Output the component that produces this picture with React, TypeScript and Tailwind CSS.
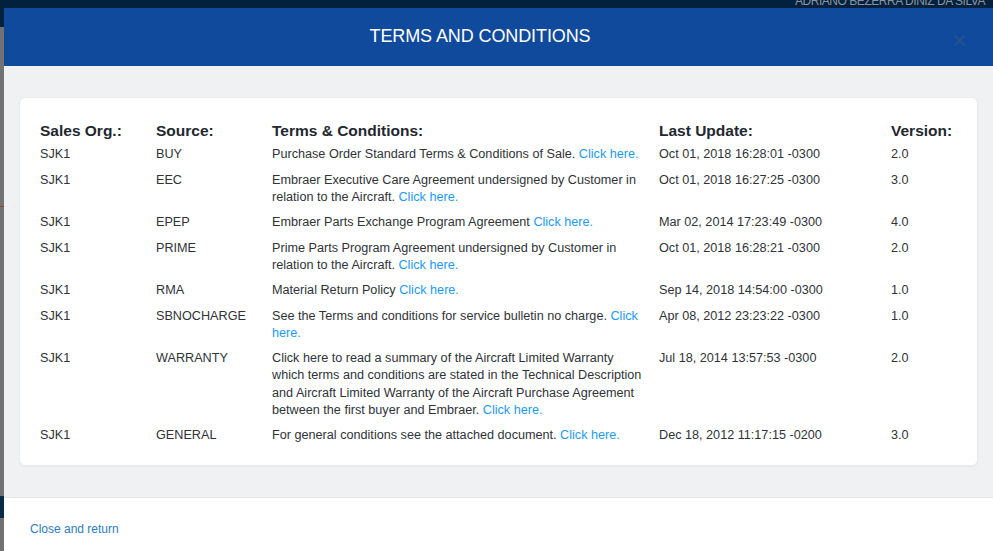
import React from "react";

const rows: { org: string; source: string; text: string; date: string; ver: string }[] = [
  { org: "SJK1", source: "BUY", text: "Purchase Order Standard Terms & Conditions of Sale.", date: "Oct 01, 2018 16:28:01 -0300", ver: "2.0" },
  { org: "SJK1", source: "EEC", text: "Embraer Executive Care Agreement undersigned by Customer in relation to the Aircraft.", date: "Oct 01, 2018 16:27:25 -0300", ver: "3.0" },
  { org: "SJK1", source: "EPEP", text: "Embraer Parts Exchange Program Agreement", date: "Mar 02, 2014 17:23:49 -0300", ver: "4.0" },
  { org: "SJK1", source: "PRIME", text: "Prime Parts Program Agreement undersigned by Customer in relation to the Aircraft.", date: "Oct 01, 2018 16:28:21 -0300", ver: "2.0" },
  { org: "SJK1", source: "RMA", text: "Material Return Policy", date: "Sep 14, 2018 14:54:00 -0300", ver: "1.0" },
  { org: "SJK1", source: "SBNOCHARGE", text: "See the Terms and conditions for service bulletin no charge.", date: "Apr 08, 2012 23:23:22 -0300", ver: "1.0" },
  {
    org: "SJK1",
    source: "WARRANTY",
    text: "Click here to read a summary of the Aircraft Limited Warranty which terms and conditions are stated in the Technical Description and Aircraft Limited Warranty of the Aircraft Purchase Agreement between the first buyer and Embraer.",
    date: "Jul 18, 2014 13:57:53 -0300",
    ver: "2.0",
  },
  { org: "SJK1", source: "GENERAL", text: "For general conditions see the attached document.", date: "Dec 18, 2012 11:17:15 -0200", ver: "3.0" },
];

export default function App() {
  return (
    <div className="w-[993px] h-[551px] overflow-hidden flex flex-col bg-[#01213f] font-['Liberation_Sans',Arial,sans-serif]">
      {/* top nav remnant */}
      <div className="h-[8px] overflow-hidden flex justify-end pr-[8px]">
        <span className="text-[12px] leading-[12px] -mt-[5px] tracking-[-0.45px] text-[#8b939d] uppercase">
          Adriano Bezerra Diniz da Silva
        </span>
      </div>
      <div className="flex flex-1 min-h-0">
        {/* background strip at left */}
        <div className="w-[4px] flex flex-col">
          <div className="h-[19px] bg-[#01213f]" />
          <div className="h-[179px] bg-[#727272]" />
          <div className="h-[1px] bg-[#a33a3a]" />
          <div className="h-[289px] bg-[#727272]" />
          <div className="h-[22px] bg-[#0a2a45]" />
          <div className="flex-1 bg-[#727272]" />
        </div>
        {/* modal */}
        <div className="flex-1 flex flex-col bg-white">
          <div className="relative h-[58px] bg-[#0f4a9c] flex justify-center items-start pt-[18px] pr-[37px]">
            <h1 className="text-[18px] leading-[21px] text-white tracking-[-0.1px]">TERMS AND CONDITIONS</h1>
            <button className="absolute right-[27px] top-[25px] w-[14px] h-[14px] flex items-center justify-center">
              <svg width="13" height="13" viewBox="0 0 13 13">
                <path d="M1.5 1.5 L11.5 11.5 M11.5 1.5 L1.5 11.5" stroke="#28508f" strokeWidth="2.2" strokeLinecap="butt" />
              </svg>
            </button>
          </div>
          <div className="flex-1 bg-[#f0f1f3] px-[15px] pt-[31px]">
            <div className="bg-white rounded-[6px] border border-[#e9eaec] shadow-[0_1px_2px_rgba(0,0,0,0.04)] px-[20px] pt-[22px] pb-[17px]">
              <table className="w-full table-fixed border-collapse text-left">
                <colgroup>
                  <col className="w-[116px]" />
                  <col className="w-[116px]" />
                  <col className="w-[387px]" />
                  <col className="w-[232px]" />
                  <col />
                </colgroup>
                <thead>
                  <tr className="text-[15.5px] leading-[21px] font-bold text-[#232830]">
                    <th className="font-bold pb-[1px]">Sales Org.:</th>
                    <th className="font-bold pb-[1px]">Source:</th>
                    <th className="font-bold pb-[1px]">Terms &amp; Conditions:</th>
                    <th className="font-bold pb-[1px]">Last Update:</th>
                    <th className="font-bold pb-[1px]">Version:</th>
                  </tr>
                </thead>
                <tbody className="text-[12.65px] leading-[17.15px] text-[#2f3338]">
                  {rows.map((r) => (
                    <tr key={r.source} className="align-top">
                      <td className="py-[4.15px]">{r.org}</td>
                      <td className="py-[4.15px]">{r.source}</td>
                      <td className="py-[4.15px] pr-[10px]">
                        {r.text} <span className="text-[#1b9af5]">Click here.</span>
                      </td>
                      <td className="py-[4.15px]">{r.date}</td>
                      <td className="py-[4.15px]">{r.ver}</td>
                    </tr>
                  ))}
                </tbody>
              </table>
            </div>
          </div>
          <div className="h-[54px] border-t border-[#e3e4e6] bg-white flex items-center px-[26px] pt-[9px]">
            <a className="text-[12px] leading-[14px] text-[#2d7cc0]">Close and return</a>
          </div>
        </div>
      </div>
    </div>
  );
}
